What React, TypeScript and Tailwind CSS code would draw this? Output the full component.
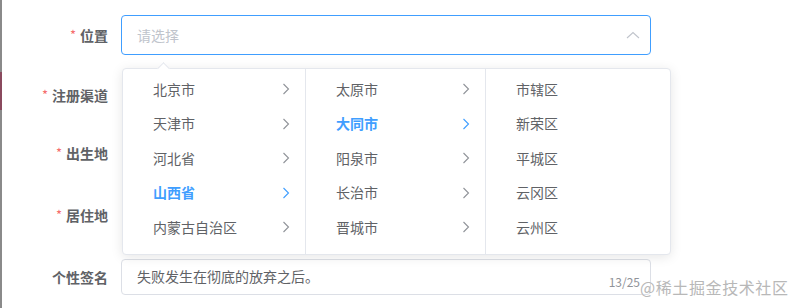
import React from "react";

const font = { fontFamily: '"Noto Sans CJK SC", "Noto Sans", "Liberation Sans", sans-serif' };

function ChevronRight({ active }: { active?: boolean }) {
  return (
    <svg width="8" height="12" viewBox="0 0 8 12" fill="none">
      <polyline points="1.5,1 6.5,6 1.5,11" stroke={active ? "#409EFF" : "#909399"} strokeWidth="1.1" />
    </svg>
  );
}

function Label({ text, required = true }: { text: string; required?: boolean }) {
  return (
    <div className="w-[119px] shrink-0 pr-[13px] flex justify-end items-center text-[14px] font-bold text-[#606266]">
      {required && <span className="text-[#F56C6C] mr-[4px] text-[13px] font-normal">*</span>}
      <span>{text}</span>
    </div>
  );
}

const col1 = ["北京市", "天津市", "河北省", "山西省", "内蒙古自治区"];
const col2 = ["太原市", "大同市", "阳泉市", "长治市", "晋城市"];
const col3 = ["市辖区", "新荣区", "平城区", "云冈区", "云州区", "阳高县"];

function Menu({ items, active, arrows, width, last }: { items: string[]; active?: number; arrows: boolean; width: string; last?: boolean }) {
  return (
    <div className={`${width} ${last ? "" : "border-r border-[#e4e7ed]"} pt-[3px] h-full overflow-hidden shrink-0`}>
      {items.map((t, i) => (
        <div key={t} className="h-[34.5px] flex items-center pl-[30px] pr-[15px] justify-between">
          <span className={i === active ? "text-[#409EFF] font-bold" : "text-[#606266]"}>{t}</span>
          {arrows && <ChevronRight active={i === active} />}
        </div>
      ))}
    </div>
  );
}

export default function App() {
  return (
    <div className="w-[801px] h-[308px] bg-white flex relative overflow-hidden text-[14px]" style={font}>
      <div className="w-[2px] h-full flex flex-col shrink-0">
        <div className="h-[72px] bg-[#8a8a8a]" />
        <div className="h-[38px] bg-[#8a4a5e]" />
        <div className="flex-1 bg-[#8a8a8a]" />
      </div>
      <div className="flex flex-col pt-[15px]">
        <div className="flex h-[40px]">
          <Label text="位置" />
          <div className="relative">
            <div className="w-[530px] h-[40px] border border-[#409EFF] rounded-[4px] flex items-center justify-between pl-[15px] pr-[10px]">
              <span className="text-[#c0c4cc]">请选择</span>
              <svg width="14" height="8" viewBox="0 0 14 8" fill="none">
                <polyline points="1,7 7,1.5 13,7" stroke="#c0c4cc" strokeWidth="1.1" />
              </svg>
            </div>
            <div className="absolute left-[1px] top-[53px] w-[549px] h-[187px] bg-white border border-[#e4e7ed] rounded-[4px] shadow-[0_2px_12px_0_rgba(0,0,0,0.1)] z-10">
              <div className="absolute left-[36px] top-[-5px] w-[9px] h-[9px] bg-white border-t border-l border-[#e4e7ed] rotate-45" />
              <div className="flex h-full relative">
                <Menu items={col1} active={3} arrows width="w-[183px]" />
                <Menu items={col2} active={1} arrows width="w-[180px]" />
                <Menu items={col3} arrows={false} width="flex-1" last />
              </div>
            </div>
          </div>
        </div>
        <div className="flex h-[40px] mt-[20px]">
          <Label text="注册渠道" />
        </div>
        <div className="flex h-[40px] mt-[18px]">
          <Label text="出生地" />
        </div>
        <div className="flex h-[40px] mt-[22px]">
          <Label text="居住地" />
        </div>
        <div className="flex h-[36px] mt-[24px]">
          <Label text="个性签名" required={false} />
          <div className="w-[530px] h-[36px] border border-[#dcdfe6] rounded-[4px] relative flex items-start pt-[6px] pl-[15px]">
            <span className="text-[#606266] leading-[20px]">失败发生在彻底的放弃之后。</span>
            <span className="absolute right-[10px] bottom-[6px] text-[12px] text-[#909399] leading-none">13/25</span>
          </div>
        </div>
      </div>
      <div className="absolute left-[640px] top-[276px] text-[16px] leading-[22px] text-[#b8b8b8] tracking-[0.6px]" style={{ textShadow: "0 0 1px rgba(255,255,255,0.9)" }}>
        @稀土掘金技术社区
      </div>
    </div>
  );
}
